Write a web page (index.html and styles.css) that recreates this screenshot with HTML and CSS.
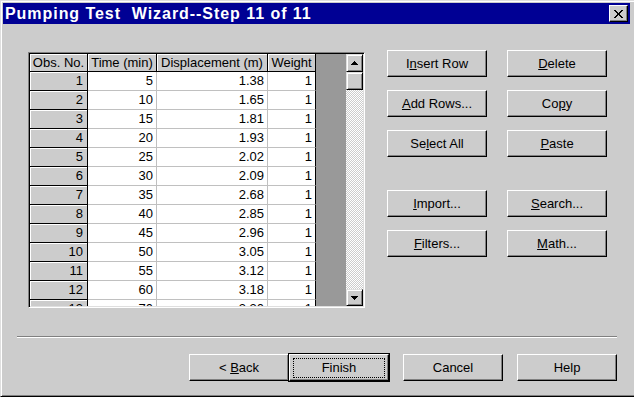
FILE: index.html
```html
<!DOCTYPE html>
<html>
<head>
<meta charset="utf-8">
<link rel="stylesheet" href="styles.css">
</head>
<body>
<div class="window">
  <div class="titlebar">
    <span class="title">Pumping Test  Wizard--Step 11 of 11</span>
    <button class="btn close" aria-label="Close">
      <svg width="9" height="8" viewBox="0 0 9 8" shape-rendering="crispEdges"><path d="M0 0h2v1h-2z M7 0h2v1h-2z M1 1h2v1h-2z M6 1h2v1h-2z M2 2h2v1h-2z M5 2h2v1h-2z M3 3h3v2h-3z M2 5h2v1h-2z M5 5h2v1h-2z M1 6h2v1h-2z M6 6h2v1h-2z M0 7h2v1h-2z M7 7h2v1h-2z" fill="#000"/></svg>
    </button>
  </div>
  <div class="main">
    <div class="grid">
      <div class="sheet">
        <div class="row head"><div class="hd">Obs. No.</div><div class="hd">Time (min)</div><div class="hd">Displacement (m)</div><div class="hd">Weight</div></div>
        <div class="row"><div class="rh">1</div><div class="c">5</div><div class="c">1.38</div><div class="c last">1</div></div>
        <div class="row"><div class="rh">2</div><div class="c">10</div><div class="c">1.65</div><div class="c last">1</div></div>
        <div class="row"><div class="rh">3</div><div class="c">15</div><div class="c">1.81</div><div class="c last">1</div></div>
        <div class="row"><div class="rh">4</div><div class="c">20</div><div class="c">1.93</div><div class="c last">1</div></div>
        <div class="row"><div class="rh">5</div><div class="c">25</div><div class="c">2.02</div><div class="c last">1</div></div>
        <div class="row"><div class="rh">6</div><div class="c">30</div><div class="c">2.09</div><div class="c last">1</div></div>
        <div class="row"><div class="rh">7</div><div class="c">35</div><div class="c">2.68</div><div class="c last">1</div></div>
        <div class="row"><div class="rh">8</div><div class="c">40</div><div class="c">2.85</div><div class="c last">1</div></div>
        <div class="row"><div class="rh">9</div><div class="c">45</div><div class="c">2.96</div><div class="c last">1</div></div>
        <div class="row"><div class="rh">10</div><div class="c">50</div><div class="c">3.05</div><div class="c last">1</div></div>
        <div class="row"><div class="rh">11</div><div class="c">55</div><div class="c">3.12</div><div class="c last">1</div></div>
        <div class="row"><div class="rh">12</div><div class="c">60</div><div class="c">3.18</div><div class="c last">1</div></div>
        <div class="row"><div class="rh">13</div><div class="c">70</div><div class="c">3.30</div><div class="c last">1</div></div>
      </div>
      <div class="filler"></div>
      <div class="vscroll">
        <div class="sbtn"><svg width="7" height="4" viewBox="0 0 7 4" shape-rendering="crispEdges"><path d="M3 0h1v1h-1z M2 1h3v1h-3z M1 2h5v1h-5z M0 3h7v1h-7z" fill="#000"/></svg></div>
        <div class="sbtn thumb"></div>
        <div class="sbtn down"><svg width="7" height="4" viewBox="0 0 7 4" shape-rendering="crispEdges"><path d="M0 0h7v1h-7z M1 1h5v1h-5z M2 2h3v1h-3z M3 3h1v1h-1z" fill="#000"/></svg></div>
      </div>
    </div>
    <div class="actions">
      <div class="group">
        <button class="btn">I<u>n</u>sert Row</button>
        <button class="btn"><u>D</u>elete</button>
        <button class="btn"><u>A</u>dd Rows...</button>
        <button class="btn">Co<u>p</u>y</button>
        <button class="btn">Se<u>l</u>ect All</button>
        <button class="btn"><u>P</u>aste</button>
      </div>
      <div class="group second">
        <button class="btn"><u>I</u>mport...</button>
        <button class="btn"><u>S</u>earch...</button>
        <button class="btn"><u>F</u>ilters...</button>
        <button class="btn"><u>M</u>ath...</button>
      </div>
    </div>
  </div>
  <div class="sep"></div>
  <div class="footer">
    <button class="btn">&lt; <u>B</u>ack</button>
    <button class="btn default">Finish</button>
    <button class="btn gap">Cancel</button>
    <button class="btn gap">Help</button>
  </div>
</div>
</body>
</html>
```
FILE: styles.css
```css
* { box-sizing: border-box; }
html, body { margin: 0; padding: 0; }
body {
  width: 634px;
  height: 397px;
  overflow: hidden;
  background: #cccccc;
  font-family: "Liberation Sans", Arial, sans-serif;
  font-size: 13px;
  color: #000;
}
.window {
  width: 634px;
  height: 397px;
  background: #cccccc;
  border-top: 1px solid #dfdfdf;
  border-left: 1px solid #dfdfdf;
  border-bottom: 1px solid #000;
  box-shadow: inset 1px 1px #fff, inset 0 -1px #808080;
  padding: 2px 4px 0 2px;
  display: flex;
  flex-direction: column;
}
.titlebar {
  height: 21px;
  background: #000094;
  color: #fff;
  display: flex;
  align-items: center;
  justify-content: space-between;
  padding: 0 2px;
}
.title {
  font-weight: bold;
  font-size: 16px;
  letter-spacing: 0.95px;
  white-space: pre;
  line-height: 21px;
}
.btn {
  width: 100px;
  height: 27px;
  background: #cccccc;
  border: 1px solid;
  border-color: #fff #000 #000 #fff;
  box-shadow: inset -1px -1px #808080;
  font-family: "Liberation Sans", Arial, sans-serif;
  font-size: 13px;
  color: #000;
  padding: 0;
  display: flex;
  align-items: center;
  justify-content: center;
  white-space: pre;
}
.close {
  width: 19px;
  height: 17px;
}
.main {
  display: flex;
  align-items: flex-start;
  padding: 26px 0 0 25px;
}
.grid {
  margin-top: 2px;
  width: 337px;
  height: 256px;
  border: 1px solid;
  border-color: #808080 #fff #fff #808080;
  box-shadow: inset 1px 1px #000, inset -1px -1px #dfdfdf;
  padding: 1px;
  display: flex;
}
.sheet {
  width: 286px;
  height: 252px;
  overflow: hidden;
  flex: none;
}
.row {
  display: grid;
  grid-template-columns: 58px 69px 111px 48px;
  height: 19px;
}
.row.head { height: 18px; }
.row > div {
  overflow: hidden;
  white-space: nowrap;
}
.hd, .rh {
  background: #cccccc;
  border-right: 1px solid #000;
  border-bottom: 1px solid #000;
  box-shadow: inset 1px 1px #fff;
}
.hd {
  text-align: center;
  line-height: 17px;
}
.rh {
  text-align: right;
  padding-right: 4px;
  line-height: 18px;
}
.c {
  background: #fff;
  border-right: 1px solid #c0c0c0;
  border-bottom: 1px solid #c0c0c0;
  text-align: right;
  padding-right: 3px;
  line-height: 18px;
}
.c.last { border-right-color: #000; }
.filler {
  flex: 1;
  background: #999999;
}
.vscroll {
  width: 17px;
  flex: none;
  display: flex;
  flex-direction: column;
  background: repeating-conic-gradient(#cccccc 0 25%, #ffffff 0 50%) 0 0 / 2px 2px;
}
.sbtn {
  height: 18px;
  background: #cccccc;
  border: 1px solid;
  border-color: #dfdfdf #000 #000 #dfdfdf;
  box-shadow: inset 1px 1px #fff, inset -1px -1px #808080;
  display: flex;
  align-items: center;
  justify-content: center;
}
.sbtn svg { display: block; }
.sbtn.down { margin-top: auto; height: 17px; }
.actions {
  margin-left: 22px;
}
.group {
  display: grid;
  grid-template-columns: 100px 100px;
  column-gap: 20px;
  row-gap: 13px;
}
.group.second { margin-top: 33px; }
.sep {
  margin: 28px 0 0 14px;
  width: 600px;
  height: 2px;
  border-top: 1px solid #808080;
  border-bottom: 1px solid #fff;
}
.footer {
  display: flex;
  margin-top: 16px;
  padding-left: 186px;
}
.footer .gap { margin-left: 14px; }
.default {
  outline: 1px solid #000;
  position: relative;
}
.default::after {
  content: "";
  position: absolute;
  left: 3px;
  right: 3px;
  top: 3px;
  bottom: 2px;
  border: 1px dotted #000;
}
```
